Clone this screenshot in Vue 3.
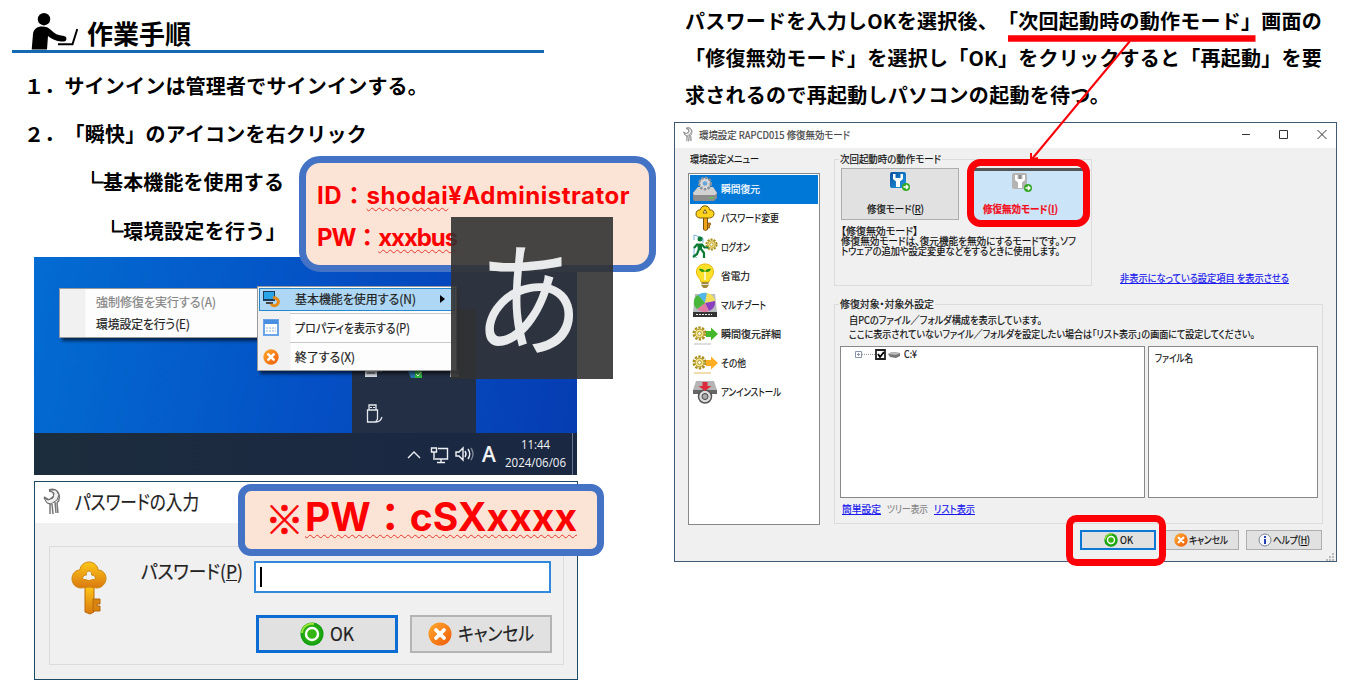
<script setup>
const menu = [
  { label: '瞬間復元', icon: 'restore', w: 39, active: true },
  { label: 'パスワード変更', icon: 'key', w: 58 },
  { label: 'ログオン', icon: 'logon', w: 29 },
  { label: '省電力', icon: 'bulb', w: 29 },
  { label: 'マルチブート', icon: 'boot', w: 45 },
  { label: '瞬間復元詳細', icon: 'detail', w: 60 },
  { label: 'その他', icon: 'other', w: 25 },
  { label: 'アンインストール', icon: 'uninstall', w: 60 },
]

// Fits a line to a given width, by tracking (default) or by horizontal scale (v-fit:x).
const vFit = {
  mounted(el, { value, arg }) {
    const range = document.createRange()
    range.selectNodeContents(el)
    const natural = range.getBoundingClientRect().width
    if (arg === 'x') {
      el.style.width = value + 'px'
      el.style.transform = `scaleX(${value / natural})`
    } else {
      el.style.letterSpacing = (value - natural) / el.textContent.length + 'px'
    }
  },
}
</script>

<template>
  <div class="page">
    <svg class="defs" width="0" height="0">
      <defs>
        <linearGradient id="gold" x1="0" y1="0" x2="0" y2="1">
          <stop offset="0" stop-color="#ffc918" /><stop offset="1" stop-color="#d9780f" />
        </linearGradient>
        <radialGradient id="green"><stop offset="0.3" stop-color="#45c412" /><stop offset="1" stop-color="#0d9a10" /></radialGradient>
        <linearGradient id="orange" x1="0" y1="0" x2="1" y2="1">
          <stop offset="0" stop-color="#ffab2e" /><stop offset="1" stop-color="#f05a0a" />
        </linearGradient>
        <linearGradient id="blue" x1="0" y1="0" x2="1" y2="1">
          <stop offset="0" stop-color="#0b4f9c" /><stop offset="1" stop-color="#1f9be6" />
        </linearGradient>
      </defs>
      <symbol id="ok" viewBox="0 0 24 24">
        <circle cx="12" cy="12" r="11.5" fill="url(#green)" />
        <path d="M2 11a10 10 0 0 1 12-9" stroke="#9be63a" stroke-width="2" fill="none" />
        <circle cx="12" cy="12" r="6" fill="#35b512" stroke="#fff" stroke-width="2.4" />
      </symbol>
      <symbol id="cancel" viewBox="0 0 24 24">
        <circle cx="12" cy="12" r="11.5" fill="url(#orange)" />
        <path d="M8 8l8 8M16 8l-8 8" stroke="#fff" stroke-width="3.8" stroke-linecap="round" />
      </symbol>
      <symbol id="key" viewBox="0 0 36 54">
        <path d="M14 25h9v26l-4 2-5-2z" fill="url(#gold)" stroke="#bd6a0c" />
        <path d="M22 38h7v5h-3v2h3v5h-7z" fill="#d9840f" stroke="#b5680c" />
        <path fill-rule="evenodd" d="M18 1c5 0 9 4 9 8 5 0 8 4 8 8.500S31 27 26 27c-3 0-5-1-8-1s-5 1-8 1c-5 0-9-4-9-9s3-9 8-9c0-4 4-8 9-8zm0 9c-2 0-3 2-2.500 4-2.500 0-4 1.500-4 4l6.500 1.500 6.500-1.500c0-2.500-1.500-4-4-4 .5-2-.5-4-2.500-4z" fill="url(#gold)" stroke="#cf8a12" />
      </symbol>
      <symbol id="wrench" viewBox="0 0 20 27">
        <path d="M6 2c4-2 9 0 10 5 1 4-1 7-2 8l1 10M3 11c0 3 2 4 4 5v10M1 9l5 3 5-4-1-4-4-1M9 16l1 10M12 14l1 11" fill="none" stroke="#777" stroke-width="1.500" />
        <path d="M6 2l5 3-1 5-5 2-4-2 3 5 4 1 6-4 2-5-3-5z" fill="#eee" stroke="#666" />
      </symbol>
      <symbol id="gear" viewBox="0 0 16 16">
        <circle cx="8" cy="8" r="6.300" fill="none" stroke="#a98e17" stroke-width="2.400" stroke-dasharray="2.600 1.350" />
        <circle cx="8" cy="8" r="4.700" fill="#f3e58b" stroke="#a98e17" />
        <circle cx="8" cy="8" r="2" fill="#fff" stroke="#a98e17" />
      </symbol>
      <symbol id="restore" viewBox="0 0 26 26">
        <path d="M1 17l5-6h15l4 6v5l-3 3H2l-1-2z" fill="#8d8d8d" /><path d="M1 17l5-6h15l4 6-2 2H2z" fill="#d2d2d2" />
        <circle cx="13" cy="7.500" r="5.800" fill="#d8d8d8" stroke="#8b9199" stroke-width="2.400" stroke-dasharray="2.500 1.300" />
        <circle cx="13" cy="7.500" r="2.300" fill="#6aa5d8" /><path d="M17 22h5" stroke="#5bd33a" />
      </symbol>
      <symbol id="listkey" viewBox="0 0 26 26">
        <path d="M11.500 12h4v12.500l-2 1-2-1z" fill="#f0a11a" stroke="#7a5208" /><path d="M15.500 18h3v2h-1v3h-2z" fill="#d9840f" stroke="#7a5208" stroke-width=".7" />
        <path fill-rule="evenodd" d="M13 .8c3 0 4.500 2 4.500 4 3 0 4.500 1.700 4.500 4s-2 4.200-4.500 4.200h-9C6 13 4 11.500 4 9s1.500-4.200 4.500-4.200c0-2 1.500-4 4.500-4zm0 3.700l-2 3.500h4z" fill="#ffd21c" stroke="#7a5a08" />
      </symbol>
      <symbol id="logon" viewBox="0 0 26 26">
        <path d="M2 6V1l9 3v5M2 13v9l3 2" fill="none" stroke="#77b6d8" />
        <use href="#gear" x="13" y="4" width="13" height="13" />
        <circle cx="8" cy="5" r="2.500" fill="#0c7a36" />
        <path d="M5 9.500h5v6.500H6z" fill="#0c7a36" />
        <path d="M5.500 10L2 14M9.500 10l3 3.500h4M9 15l3 4v5M7 15l-2 5-4 3" fill="none" stroke="#0c7a36" stroke-width="2.200" stroke-linejoin="round" />
      </symbol>
      <symbol id="bulb" viewBox="0 0 26 26">
        <path d="M13 1c6 0 8.500 4 8.500 8 0 5-4 6-4.500 10H9C8.500 15 4.500 14 4.500 9c0-4 2.500-8 8.500-8z" fill="#ffe02a" stroke="#e8b90a" />
        <path d="M7 6c3-.5 5 .5 6 2.500 1-2 3-3 6-2.500-1 2.500-3 3.500-6 2.500-3 1-5 0-6-2.500z" fill="#2f9914" /><path d="M13 9v8" stroke="#fff8bb" stroke-width="2" />
        <path d="M9.500 19h7v4l-2 2h-3l-2-2z" fill="#a08a3a" /><path d="M9.500 21.500h7" stroke="#ddd" />
      </symbol>
      <symbol id="boot" viewBox="0 0 26 26">
        <path d="M3 2h20l2 18H1z" fill="#b9bcc0" /><path d="M1 20h24v5H1z" fill="#333" /><path d="M4 22.500h16" stroke="#eee" stroke-dasharray="2 1" />
        <path d="M13 11L6 3a10 9 0 0 1 9-2z" fill="#52b7e8" /><path d="M13 11l2-10a9 9 0 0 1 8 8z" fill="#f2e05c" />
        <path d="M13 11l10-2a10 9 0 0 1-6 10z" fill="#8a3fc0" /><path d="M13 11l4 8a10 9 0 0 1-12-2z" fill="#e07aa0" /><path d="M13 11l-8 6a10 9 0 0 1 1-14z" fill="#49b83a" />
      </symbol>
      <symbol id="detail" viewBox="0 0 26 26">
        <use href="#gear" x="0" y="5" width="15" height="15" /><path d="M14 10h5V6.500l7 6.500-7 6.500V16h-5z" fill="#45b82b" /><path d="M2 23h17" stroke="#ddd" stroke-width="2" />
      </symbol>
      <symbol id="other" viewBox="0 0 26 26">
        <use href="#gear" x="0" y="5" width="15" height="15" /><path d="M14 10h5V6.500l7 6.500-7 6.500V16h-5z" fill="#ffad22" /><path d="M2 23h17" stroke="#f3ddb0" stroke-width="2" />
      </symbol>
      <symbol id="uninstall" viewBox="0 0 26 26">
        <path d="M4 2h18l3 9H1z" fill="#b5b5b5" /><path d="M1 11h24v4H1z" fill="#666" />
        <circle cx="13" cy="17.500" r="6.500" fill="#ddd" stroke="#555" stroke-width="1.500" /><circle cx="13" cy="17.500" r="3" fill="#aaa" stroke="#444" />
        <path d="M10.500 3h5v4h4L13 12 6.500 7h4z" fill="#dc2b3c" />
      </symbol>
      <symbol id="go" viewBox="0 0 8 8"><circle cx="4" cy="4" r="4" fill="#36a924" /><path d="M1.500 4h4M4 2l2 2-2 2" stroke="#fff" stroke-width="1.300" fill="none" /></symbol>
    </svg>

    <section class="left">
      <header class="heading">
        <svg class="person" viewBox="0 0 47 37" width="47" height="37">
          <circle cx="13" cy="6.200" r="6.200" />
          <path d="M.7 36.500L2 21c.6-5 4-7.500 9-7.500 4 0 6.500 1 9 3.500 3 3.500 7 5.500 13 6 3.500.5 3 5.500 0 5.500-7 0-12-2-16-5.500l-1 13.500z" />
          <path d="M27 31.300h14.500L46.300 16" fill="none" stroke="#000" stroke-width="2" />
        </svg>
        <h1 v-fit="104">作業手順</h1>
      </header>
      <p class="step s1"><span v-fit="404">１．サインインは管理者でサインインする。</span></p>
      <p class="step s2"><span v-fit="343">２．「瞬快」のアイコンを右クリック</span></p>
      <p class="step s3"><span v-fit="201"><b class="corner">└</b>基本機能を使用する</span></p>
      <p class="step s4"><span v-fit="183"><b class="corner">└</b>環境設定を行う」</span></p>

      <div class="desktop">
        <div class="tray">
          <svg width="124" height="124" viewBox="0 0 124 124">
            <path d="M13 60h12v8H13z" fill="#d9dde5" /><path d="M15 64h8" stroke="#333" /><path d="M25 62h6" stroke="#d9dde5" stroke-dasharray="2 1" />
            <path d="M55 60h12l-3 9h-5z" fill="#2a78b0" /><path d="M63 60h7v9h-7z" fill="#2fb93b" /><path d="M64 65l2 2 3-4" stroke="#fff" fill="none" />
            <path d="M98 60h9v8h-9z" fill="#aaa" />
            <path d="M17 101v-5h7v5M15.500 101h10v9l-2 3h-8zM24 113c3 0 5-2 6-5" fill="none" stroke="#e4e7ed" stroke-width="1.300" /><path d="M18 98.500h5" stroke="#e4e7ed" stroke-dasharray="2 1" />
          </svg>
        </div>
        <div class="taskbar">
          <svg width="90" height="42" viewBox="0 0 90 42" fill="none" stroke="#eef1f5" stroke-width="1.400">
            <path d="M1 25l6-6 6 6M31 15.500h9.500V26H28M34 26v3M30 29.500h8" /><path d="M24.500 15h5v4h-5zM27 19v8" />
            <path d="M49 19v4h3l4 4V15l-4 4zM58 18q2 3 0 6M61 16q3.500 5 0 10" /><path d="M64 15q4 6 0 12" stroke="#7a8494" />
          </svg>
          <span class="ime">A</span>
          <div class="clock"><span v-fit:x="29">11:44</span><span v-fit:x="61">2024/06/06</span></div>
          <i class="peek"></i>
        </div>
        <div class="menu sub">
          <div class="mi off"><span v-fit:x="120">強制修復を実行する(A)</span></div>
          <div class="mi"><span v-fit:x="94">環境設定を行う(E)</span></div>
        </div>
        <div class="menu main">
          <div class="mi hot">
            <svg class="ic" width="18" height="18" viewBox="0 0 18 18"><path d="M1 1h12v10H1z" fill="#203c5c" /><path d="M2 2h10v7H2z" fill="#29a5e8" /><path d="M4 13h7" stroke="#444" stroke-width="2" /><path d="M11 8a4 4 0 1 1-2 6" stroke="#e98916" stroke-width="3" fill="none" /></svg>
            <span v-fit:x="121">基本機能を使用する(N)</span><i class="arrow"></i>
          </div>
          <hr />
          <div class="mi">
            <svg class="ic" width="16" height="17" viewBox="0 0 16 17"><path d="M1 1h14v15H1z" fill="#fff" stroke="#6ba5e8" stroke-width="2" /><path d="M1 3h14" stroke="#478de0" stroke-width="4" /><path d="M3 9h10M3 12h10" stroke="#b7cde5" stroke-width="1.500" stroke-dasharray="2 1" /></svg>
            <span v-fit:x="115">プロパティを表示する(P)</span>
          </div>
          <hr />
          <div class="mi"><svg class="ic" width="16" height="16"><use href="#cancel" /></svg><span v-fit:x="60">終了する(X)</span></div>
        </div>
      </div>

      <div class="dialog">
        <div class="dtitle"><svg width="20" height="27"><use href="#wrench" /></svg><span v-fit:x="124">パスワードの入力</span></div>
        <div class="dframe">
          <svg class="bigkey" width="36" height="54"><use href="#key" /></svg>
          <div class="dform">
            <label><span v-fit:x="102">パスワード(<u>P</u>)</span><b class="input"><i></i></b></label>
            <div class="dbtns">
              <b class="btn def"><svg width="24" height="24"><use href="#ok" /></svg><span v-fit:x="24">OK</span></b>
              <b class="btn"><svg width="24" height="24"><use href="#cancel" /></svg><span v-fit:x="76">キャンセル</span></b>
            </div>
          </div>
        </div>
      </div>
    </section>

    <section class="right">
      <div class="para">
        <p><span v-fit="637">パスワードを入力しOKを選択後、「次回起動時の動作モード」画面の</span></p>
        <p><span v-fit="637">「修復無効モード」を選択し「OK」をクリックすると「再起動」を要</span></p>
        <p><span v-fit="425">求されるので再起動しパソコンの起動を待つ。</span></p>
      </div>

      <div class="window">
        <div class="wtitle">
          <svg width="11" height="15"><use href="#wrench" /></svg><span v-fit:x="151">環境設定 RAPCD015 修復無効モード</span>
          <svg class="ctl" width="86" height="11" viewBox="0 0 86 11" fill="none" stroke="#333"><path d="M1 5.500h8M38.500 1.500h8v8h-8zM76.500 1l9 9M85.500 1l-9 9" /></svg>
        </div>
        <div class="wbody">
          <aside>
            <span class="cap" v-fit:x="69">環境設定メニュー</span>
            <ul>
              <li v-for="m in menu" :key="m.label" :class="{ active: m.active }">
                <svg width="26" height="26"><use :href="m.icon === 'key' ? '#listkey' : '#' + m.icon" /></svg><span v-fit:x="m.w">{{ m.label }}</span>
              </li>
            </ul>
          </aside>
          <div class="content">
            <div class="toprow">
              <div class="group g1">
                <span class="legend"><span v-fit:x="101">次回起動時の動作モード</span></span>
                <div class="modes">
                  <div class="mode">
                    <svg width="20" height="20" viewBox="0 0 20 20"><rect width="16" height="16" rx="2" fill="url(#blue)" /><path d="M3 2v5l3 2.500V15h4V9.500L13 7V2h-2.500v4h-5V2z" fill="#fff" /><use href="#go" x="12" y="11" width="8" height="8" /></svg>
                    <span v-fit:x="57">修復モード(<u>R</u>)</span>
                  </div>
                  <div class="mode sel">
                    <svg width="20" height="20" viewBox="0 0 20 20"><rect width="15" height="16" rx="2" fill="#b4b4b4" /><path d="M3 2v5l3 2.500V15h4V9.500L13 7V2h-2.500v4h-5V2z" fill="#fff" /><path d="M7 2h2v4H7z" fill="#888" /><use href="#go" x="12" y="11" width="8" height="8" /></svg>
                    <span v-fit:x="75">修復無効モード(<u>I</u>)</span>
                  </div>
                </div>
                <div class="desc">
                  <span v-fit:x="77">【修復無効モード】</span>
                  <span v-fit:x="235">修復無効モードは、復元機能を無効にするモードです。ソフ</span>
                  <span v-fit:x="219">トウェアの追加や設定変更などをするときに使用します。</span>
                </div>
              </div>
              <a class="show"><span v-fit:x="169">非表示になっている設定項目 を表示させる</span></a>
            </div>
            <div class="group g2">
              <span class="legend"><span v-fit:x="94">修復対象・対象外設定</span></span>
              <div class="info">
                <span v-fit:x="193">自PCのファイル／フォルダ構成を表示しています。</span>
                <span v-fit:x="406">ここに表示されていないファイル／フォルダを設定したい場合は「リスト表示」の画面にて設定してください。</span>
              </div>
              <div class="panes">
                <div class="pane tree">
                  <svg width="47" height="13" viewBox="0 0 47 13"><path d="M1.500 3.500h6v6h-6zM3 6.500h3M4.500 5v3" fill="#fff" stroke="#8b93a6" /><path d="M8 6.500h13" stroke="#999" stroke-dasharray="1 1" /><path d="M22 2h9v9h-9z" fill="#fff" stroke="#222" stroke-width="1.800" /><path d="M24 6l2 3 4-5" fill="none" stroke="#000" stroke-width="1.800" /><path d="M34 6l4-2 8 1v3l-4 2-6-1z" fill="#777" /><path d="M34 6l4-2 8 1-4 2z" fill="#bbb" /></svg>
                  <span v-fit:x="13">C:¥</span>
                </div>
                <div class="pane"><span class="fname" v-fit:x="38">ファイル名</span></div>
              </div>
              <div class="links"><a v-fit:x="39">簡単設定</a><span v-fit:x="41">ツリー表示</span><a v-fit:x="41">リスト表示</a></div>
            </div>
            <div class="wbtns">
              <b class="wb def"><svg width="14" height="14"><use href="#ok" /></svg><span v-fit:x="13">OK</span></b>
              <b class="wb"><svg width="14" height="14"><use href="#cancel" /></svg><span v-fit:x="39">キャンセル</span></b>
              <b class="wb"><svg width="14" height="14" viewBox="0 0 14 14"><circle cx="7" cy="7" r="6" fill="#f4f6fa" stroke="#7d8493" /><path d="M7 3v2M7 6v5" stroke="#2340b0" stroke-width="2" /></svg><span v-fit:x="37">ヘルプ(<u>H</u>)</span></b>
            </div>
          </div>
          <svg class="grip" width="8" height="8" viewBox="0 0 8 8" fill="#bbb"><path d="M6 0h2v2H6zM3 3h2v2H3zM6 3h2v2H6zM0 6h2v2H0zM3 6h2v2H3zM6 6h2v2H6z" /></svg>
        </div>
      </div>
    </section>

    <div class="note login">
      <span v-fit="313">ID：<em>shodai</em>¥Administrator</span>
      <span v-fit="140">PW：<em>xxxbus</em></span>
    </div>
    <div class="note pass"><b class="mark">※</b><span v-fit="272"><em>PW：cSXxxxx</em></span></div>
    <div class="kana"><b>あ</b></div>

    <svg class="marks" width="1346" height="686" viewBox="0 0 1346 686" fill="none" stroke="#fb0007">
      <path d="M1008 38.500h247.500" stroke-width="6.500" />
      <path d="M1130 41L1032 159" stroke-width="2" /><path d="M1031 153v7l7-2" stroke-width="2" />
      <rect x="970.500" y="162.500" width="116" height="61" rx="10" stroke-width="7" />
      <rect x="1069.500" y="518.500" width="93" height="44" rx="7" stroke-width="7" />
    </svg>
  </div>
</template>

<style>
body { background: #fff; }
</style>

<style scoped>
* { box-sizing: border-box; margin: 0; padding: 0; }
.page { position: relative; width: 1346px; height: 686px; overflow: hidden; display: flex; background: #fff; color: #000; font-family: "Noto Sans CJK JP", sans-serif; white-space: nowrap; text-spacing-trim: space-all; }
.page span, .links a { transform-origin: 0 50%; }
.defs { position: absolute; }
svg { display: block; flex: none; }
i, em, b { font-style: normal; font-weight: inherit; }
.left { width: 674px; }
.heading { display: flex; width: 532px; height: 53px; margin-left: 12px; padding-left: 19px; border-bottom: 3px solid #1469b5; }
.person { margin-top: 13px; }
h1 { margin-left: 9px; font-size: 26px; line-height: 66px; height: 50px; font-weight: 700; }
.step { display: flex; align-items: center; font-size: 20px; line-height: 24px; font-weight: 700; }
.s1 { margin-top: 9px; height: 48px; padding-left: 24px; }
.s2 { height: 47px; padding-left: 24px; }
.s3 { height: 49px; padding-left: 83px; }
.s4 { height: 49px; padding-left: 103px; }
.corner { -webkit-text-stroke: 1.200px #000; }

.desktop { position: relative; width: 543px; height: 218px; margin: 2px 0 0 34px; display: flex; flex-direction: column; justify-content: flex-end; background: linear-gradient(100deg, #036cd2, #0450c4 52%, #063cb2); font-feature-settings: "palt"; }
.tray { width: 124px; height: 124px; margin-left: 318px; background: #232f45; }
.taskbar { display: flex; align-items: center; height: 42px; padding-left: 373px; background: linear-gradient(90deg, #1c2d3d, #1b2842 70%); color: #f2f4f7; }
.ime { width: 23px; margin-left: -15px; font: 500 21px/42px "Noto Sans", sans-serif; -webkit-text-stroke: .2px #f2f4f7; }
.clock { display: flex; flex-direction: column; align-items: center; width: 61px; font: 12px/18px "Open Sans", sans-serif; }
.clock span { height: 18px; }
.peek { width: 1px; height: 42px; margin-left: 6px; background: #68758a; }
.menu { position: absolute; background: #fdfdfd; color: #222; border: 1px solid #999; box-shadow: 3px 3px 3px rgba(0, 0, 0, .6); font-size: 12.500px; -webkit-text-stroke: .2px; }
.mi { position: relative; display: flex; align-items: center; height: 22px; padding-bottom: 2px; }
.sub { left: 25px; top: 31px; width: 199px; height: 50px; padding: 2px 0 2px 36px; background: linear-gradient(90deg, #f1f1f1 25px, #fdfdfd 26px); }
.off { color: #858585; }
.main { left: 223px; top: 29px; width: 200px; height: 85px; padding: 1px 1px; background: linear-gradient(90deg, #f1f1f1 32px, #fdfdfd 33px); }
.main .mi { height: 23px; padding-left: 36px; }
.main .hot { background: #add7f5; border: 1px solid #2389cc; padding-left: 35px; }
.ic { position: absolute; left: 4px; }
.hot .ic { left: 2px; }
.arrow { margin-left: 24px; border: 4px solid transparent; border-left: 5px solid #000; }
.main hr { border: 0; height: 1px; margin: 2px 0 3px 31px; background: #c8c8c8; }

.dialog { width: 544px; height: 199px; margin: 6px 0 0 34px; border: 1.500px solid #1c4a63; background: #f0f0f0; font-feature-settings: "palt"; color: #222; -webkit-text-stroke: .2px; }
.dtitle { display: flex; align-items: center; height: 41px; padding: 0 0 2px 8px; gap: 12px; background: #fff; font-size: 20px; }
.dframe { display: flex; width: 515px; height: 119px; margin: 23px 0 0 14px; border: 1.500px solid #dcdcdc; font-size: 19px; line-height: 22px; }
.bigkey { margin: 14px 34px 0 21px; }
.dform { padding-top: 14px; }
.dform label { display: flex; align-items: flex-start; gap: 11px; }
.dform label span { margin-top: -1px; }
.input { width: 297px; height: 32px; padding: 4px; border: 2px solid #3089dc; background: #fff; }
.input i { display: block; width: 1.500px; height: 20px; background: #000; }
.dbtns { display: flex; gap: 12px; margin: 22px 0 0 115px; }
.btn { display: flex; align-items: center; justify-content: center; gap: 6px; width: 142px; height: 38px; padding-bottom: 1px; border: 2px solid #b4b4b4; background: #e1e1e1; }
.btn.def { border: 3px solid #0b6cd4; }
.btn span { margin-top: -2px; }

.right { width: 672px; }
.para { height: 122px; padding: 2px 0 0 11px; font-size: 20px; font-weight: 700; }
.para p { height: 37px; line-height: 37px; }
.window { width: 663px; height: 440px; border: 1px solid #405a76; background: #f0f0f0; font-size: 10.500px; line-height: 12px; font-feature-settings: "palt"; color: #111; -webkit-text-stroke: .2px; }
.wtitle { display: flex; align-items: center; height: 25px; padding: 0 0 2px 8px; gap: 5px; background: #fff; color: #444; }
.ctl { margin-left: 386px; }
.wbody { position: relative; display: flex; padding: 4px 0 0 13px; }
aside { width: 133px; }
.cap { display: block; height: 12px; margin: 1px 0 8px 2px; }
aside ul { list-style: none; width: 132px; height: 352px; padding: 1px; border: 1px solid #888; background: #fff; }
aside li { display: flex; align-items: center; height: 29px; padding: 0 0 1px 2px; gap: 3px; }
aside li.active { background: #0078d7; color: #fff; }
.content { width: 489px; margin-left: 13px; }
.toprow { display: flex; height: 141px; }
.group { border: 1px solid #dcdcdc; }
.legend { display: block; width: max-content; height: 12px; margin: -7px 0 0 4px; padding: 0 1px; background: #f0f0f0; }
.legend span, .desc span, .info span { display: block; }
.g1 { width: 258px; height: 127px; margin-top: 7px; }
.modes { display: flex; gap: 9px; margin: 3px 0 0 6px; }
.mode { display: flex; flex-direction: column; align-items: center; justify-content: space-between; width: 118px; height: 52px; padding: 3px 4px 4px; border: 1px solid #adadad; background: #e1e1e1; }
.mode span { margin-right: 9px; }
.mode.sel { width: 115px; padding: 2px 12px 5px 4px; border: 0; border-top: 3px solid #555; background: #cce4f7; color: #f20f1e; font-weight: 700; }
.mode.sel span { margin-right: 2px; }
.desc { margin: 6px 0 0 6px; line-height: 10px; }
.show { margin: 120px 0 0 28px; }
a { color: #1a1aee; text-decoration: underline; }
.show span { display: block; text-decoration: underline; }
.g2 { height: 220px; margin-top: 11px; }
.info { margin: 3px 0 0 14px; line-height: 14px; }
.panes { display: flex; gap: 3px; margin: 5px 0 0 5px; }
.pane { width: 170px; height: 152px; padding: 5px 6px; border: 1px solid #888; background: #fff; }
.tree { display: flex; gap: 3px; width: 305px; padding: 1px 13px; }
.fname { display: block; }
.links { display: flex; gap: 6px; margin: 5px 0 0 7px; }
.links a { display: block; }
.links span { display: block; color: #888; }
.wbtns { display: flex; justify-content: flex-end; gap: 7px; margin: 6px 1px 0 0; }
.wb { display: flex; align-items: center; justify-content: center; gap: 1px; width: 76px; height: 20px; border: 1px solid #adadad; background: #e1e1e1; }
.wb.def { border: 2px solid #0a78d4; }
.wb span { margin-top: -1px; }
.wbtns .def { gap: 2px; }
.grip { position: absolute; right: 2px; bottom: -11px; }

.note { position: absolute; background: #fbe3d6; border: 7px solid #4472c4; color: #fd0000; font-family: Inter, "Noto Sans CJK JP", sans-serif; font-weight: 700; }
.note em { text-decoration: underline wavy #e43a2e 1px; text-underline-offset: 3px; text-decoration-skip-ink: none; }
.login { left: 299px; top: 156px; width: 357px; height: 116px; padding: 12px 0 0 11px; border-radius: 21px; font-size: 24px; line-height: 42px; display: flex; flex-direction: column; align-items: flex-start; }
.pass { left: 238px; top: 484px; width: 366px; height: 72px; padding: 0 0 0 20px; border-radius: 13px; font-size: 39px; line-height: 52px; display: flex; }
.mark { width: 40px; font-family: "Noto Sans CJK JP", sans-serif; -webkit-text-stroke: .6px #fd0000; }
.kana { position: absolute; left: 451px; top: 217px; width: 162px; height: 162px; background: rgba(50, 50, 50, .9); color: #e9eaeb; text-align: center; font-size: 110px; line-height: 150px; }
.kana b { display: block; margin-left: -7px; transform: scaleY(1.13); }
.marks { position: absolute; left: 0; top: 0; pointer-events: none; }
</style>
